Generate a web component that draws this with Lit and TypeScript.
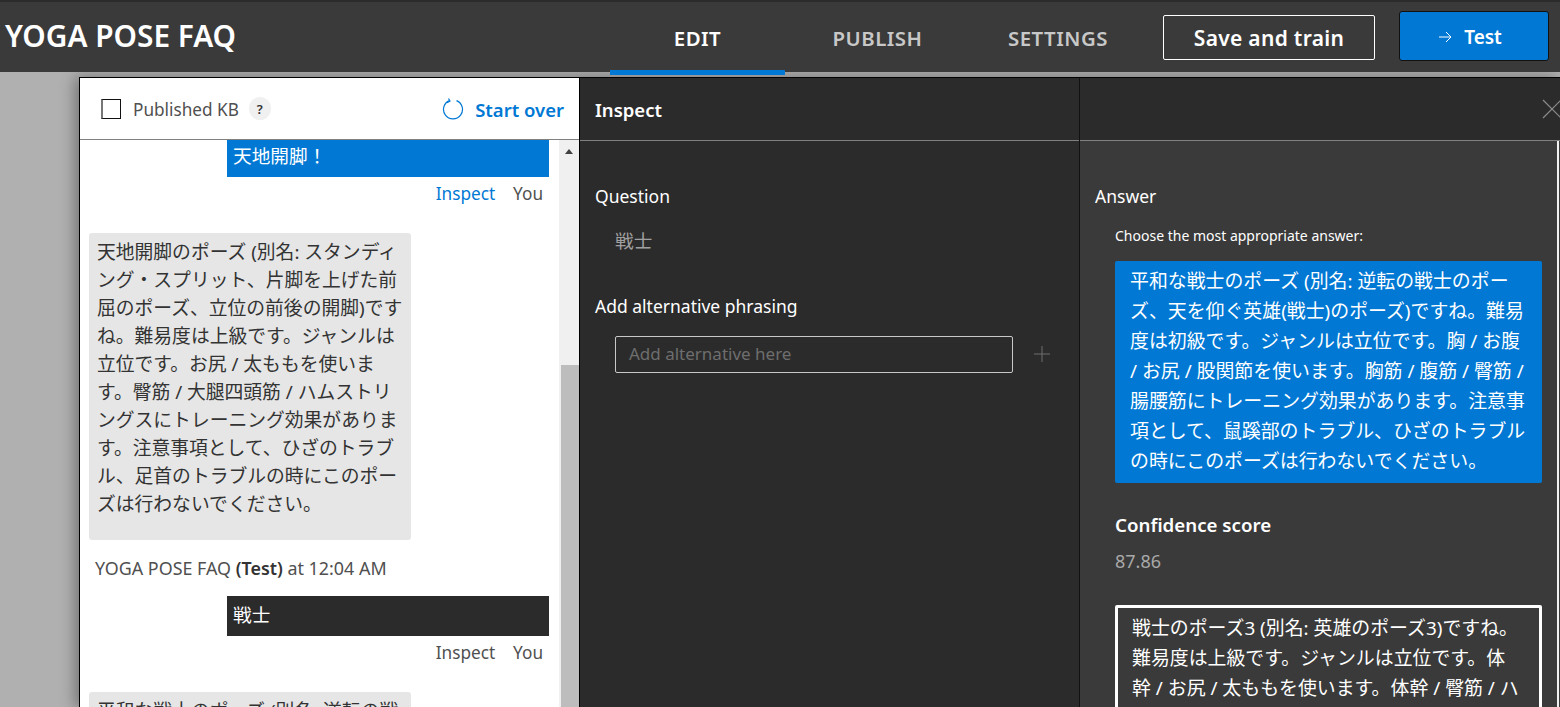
import { LitElement, html, css } from "lit";
import { customElement } from "lit/decorators.js";

const greyLines = [
  "天地開脚のポーズ (別名: スタンディ",
  "ング・スプリット、片脚を上げた前",
  "屈のポーズ、立位の前後の開脚)です",
  "ね。難易度は上級です。ジャンルは",
  "立位です。お尻 / 太ももを使いま",
  "す。臀筋 / 大腿四頭筋 / ハムストリ",
  "ングスにトレーニング効果がありま",
  "す。注意事項として、ひざのトラブ",
  "ル、足首のトラブルの時にこのポー",
  "ズは行わないでください。",
];

const answerLines = [
  "平和な戦士のポーズ (別名: 逆転の戦士のポー",
  "ズ、天を仰ぐ英雄(戦士)のポーズ)ですね。難易",
  "度は初級です。ジャンルは立位です。胸 / お腹",
  "/ お尻 / 股関節を使います。胸筋 / 腹筋 / 臀筋 /",
  "腸腰筋にトレーニング効果があります。注意事",
  "項として、鼠蹊部のトラブル、ひざのトラブル",
  "の時にこのポーズは行わないでください。",
];

const altLines = [
  "戦士のポーズ3 (別名: 英雄のポーズ3)ですね。",
  "難易度は上級です。ジャンルは立位です。体",
  "幹 / お尻 / 太ももを使います。体幹 / 臀筋 / ハ",
];

@customElement("app-root")
export class AppRoot extends LitElement {
  static styles = css`
    :host {
      display: block;
      width: 1560px;
      height: 707px;
      overflow: hidden;
      background: #b0b0b0;
      font-family: "Noto Sans", "Noto Sans CJK JP", sans-serif;
      font-size: 18px;
    }

    .line {
      white-space: nowrap;
    }

    header {
      display: flex;
      align-items: flex-start;
      height: 70px;
      background: #3a3a3a;
      border-top: 2px solid #2b2b2b;
      position: relative;
    }

    .title {
      width: 610px;
      padding: 14px 0 0 5px;
      box-sizing: border-box;
      color: #fff;
      font-size: 29.8px;
      font-weight: 600;
      line-height: 40px;
    }

    .tab {
      width: 175px;
      height: 73px;
      box-sizing: border-box;
      padding-top: 22px;
      text-align: center;
      color: #c8c8c8;
      font-size: 20.4px;
      font-weight: 600;
      line-height: 28px;
      letter-spacing: 0.5px;
    }

    .tab.active {
      color: #fff;
      border-bottom: 5px solid #0078d4;
    }

    .tab.narrow {
      width: 176px;
    }

    .tab.mid {
      width: 185px;
    }

    .save {
      margin: 13px 0 0 17px;
      width: 212px;
      height: 45px;
      box-sizing: border-box;
      border: 1px solid #fff;
      border-radius: 2px;
      background: transparent;
      color: #fff;
      font: 600 21px "Noto Sans", sans-serif;
      letter-spacing: 0.3px;
    }

    .test {
      margin: 9px 0 0 24px;
      width: 150px;
      height: 50px;
      box-sizing: border-box;
      border: 1px solid #111;
      border-radius: 3px;
      padding: 2px 8px 0 0;
      background: #0078d4;
      color: #fff;
      font: 600 19px "Noto Sans", sans-serif;
      display: flex;
      align-items: center;
      justify-content: center;
      gap: 12px;
    }

    main {
      display: flex;
      margin: 5px 0 0 79px;
      height: 630px;
      box-shadow: -4px 0 14px rgba(0, 0, 0, 0.35);
      border-top: 1px solid #000;
      border-left: 1px solid #000;
    }

    .chat {
      width: 500px;
      flex: none;
      background: #fff;
      display: flex;
      flex-direction: column;
      border-right: 1px solid #000;
      box-sizing: border-box;
    }

    .chat-head {
      height: 62px;
      flex: none;
      box-sizing: border-box;
      border-bottom: 1px solid #808080;
      display: flex;
      align-items: center;
      padding: 0 15px 0 21px;
      color: #505050;
      font-size: 17.2px;
    }

    .kb {
      padding-top: 1px;
    }

    .check {
      width: 20px;
      height: 20px;
      box-sizing: border-box;
      border: 1px solid #111;
      border-left: 2px solid #777;
      margin-right: 12px;
      flex: none;
    }

    .help {
      width: 22px;
      height: 23px;
      margin-left: 10px;
      border-radius: 50%;
      background: #f0f0f0;
      color: #333;
      font-size: 13px;
      font-weight: 600;
      display: flex;
      align-items: center;
      justify-content: center;
    }

    .start {
      margin-left: auto;
      display: flex;
      align-items: center;
      gap: 11px;
      padding-top: 1px;
      color: #0078d4;
      font-size: 18.5px;
      font-weight: 600;
    }

    .chat-body {
      flex: 1;
      display: flex;
      min-height: 0;
    }

    .messages {
      width: 479px;
      flex: none;
      overflow: hidden;
    }

    .scrollbar {
      width: 20px;
      flex: none;
      background: #f0f0f0;
      display: flex;
      flex-direction: column;
    }

    .arrow {
      width: 0;
      height: 0;
      margin: 9px auto 0;
      border-left: 4px solid transparent;
      border-right: 4px solid transparent;
      border-bottom: 5px solid #404040;
    }

    .thumb {
      margin: 211px 0 0 2px;
      flex: 1;
      background: #bdbdbd;
    }

    .mine {
      margin-left: 147px;
      width: 322px;
      box-sizing: border-box;
      padding-left: 6px;
      color: #fff;
      font-size: 18.67px;
      display: flex;
      align-items: center;
    }

    .mine.blue {
      height: 37px;
      padding-bottom: 8px;
      background: #0078d4;
    }

    .mine.dark {
      height: 40px;
      padding-bottom: 6px;
      margin-top: 15px;
      background: #2b2b2b;
    }

    .meta {
      display: flex;
      justify-content: flex-end;
      gap: 18px;
      padding: 4px 16px 0 0;
      height: 26px;
      line-height: 26px;
      color: #505050;
      font-size: 17.2px;
    }

    .meta .link {
      color: #0078d4;
    }

    .bubble {
      margin: 26px 0 0 9px;
      width: 322px;
      box-sizing: border-box;
      padding: 5px 0 0 8px;
      background: #e6e6e6;
      border-radius: 3px;
      color: #333;
      font-size: 18.8px;
      line-height: 28px;
    }

    .bubble.full {
      height: 307px;
    }

    .stamp {
      margin: 15px 0 0 15px;
      color: #505050;
      font-size: 17.9px;
      line-height: 26px;
    }

    .stamp b {
      font-weight: 600;
      color: #333;
    }

    .inspect {
      width: 500px;
      flex: none;
      background: #2b2b2b;
      border-right: 1px solid #111;
      box-sizing: border-box;
      color: #fff;
    }

    .panel-head {
      height: 63px;
      box-sizing: border-box;
      border-bottom: 1px solid #808080;
      display: flex;
      align-items: center;
      justify-content: space-between;
    }

    .inspect .panel-head {
      padding-left: 15px;
      font-size: 18.5px;
      font-weight: 600;
    }

    .label {
      font-size: 17.5px;
      line-height: 26px;
    }

    .inspect-body {
      padding: 42px 0 0 15px;
    }

    .question {
      margin: 18px 0 0 20px;
      color: #a0a0a0;
      font-size: 18.67px;
      line-height: 28px;
    }

    .inspect-body .label.alt {
      margin-top: 38px;
    }

    .alt-row {
      display: flex;
      align-items: center;
      margin: 17px 0 0 20px;
      gap: 20px;
    }

    .alt-input {
      width: 398px;
      height: 37px;
      box-sizing: border-box;
      border: 1px solid #c8c8c8;
      border-radius: 2px;
      padding-left: 13px;
      color: #6e6e6e;
      font-size: 17px;
      line-height: 33px;
    }

    .alt-row svg {
      margin-top: -2px;
    }

    .answer {
      flex: 1;
      min-width: 0;
      color: #fff;
    }

    .answer .panel-head {
      background: #2b2b2b;
      padding-right: 0;
      justify-content: flex-end;
    }

    .answer-body {
      height: 568px;
      overflow: hidden;
      background: #3a3a3a;
      box-sizing: border-box;
      padding: 42px 0 0 15px;
      position: relative;
    }

    .edge {
      position: absolute;
      top: 0;
      right: 1px;
      bottom: 0;
      width: 2px;
      background: #f0f0f0;
    }

    .hint {
      margin: 16px 0 0 20px;
      font-size: 14px;
      line-height: 22px;
    }

    .pick {
      margin: 14px 0 0 20px;
      width: 427px;
      box-sizing: border-box;
      padding: 5px 0 7px 15px;
      background: #0078d4;
      border-radius: 2px;
      font-size: 18.9px;
      line-height: 30px;
    }

    .score-title {
      margin: 28px 0 0 20px;
      font-size: 18.7px;
      font-weight: 600;
      line-height: 28px;
    }

    .score {
      margin: 9px 0 0 20px;
      color: #a8a8a8;
      font-size: 18px;
      line-height: 26px;
    }

    .other {
      margin: 31px 0 0 20px;
      width: 427px;
      height: 222px;
      box-sizing: border-box;
      padding: 5px 0 0 14px;
      border: 3px solid #fff;
      border-radius: 2px;
      font-size: 18.9px;
      line-height: 30px;
    }
  `;

  render() {
    return html`
      <header>
        <div class="title">YOGA POSE FAQ</div>
        <div class="tab active">EDIT</div>
        <div class="tab mid">PUBLISH</div>
        <div class="tab narrow">SETTINGS</div>
        <button class="save">Save and train</button>
        <div class="test">
          <svg width="14" height="14" viewBox="0 0 14 14" fill="none" stroke="#fff" stroke-width="1">
            <path d="M1 7h12M8 2l5 5-5 5" />
          </svg>
          Test
        </div>
      </header>
      <main>
        <section class="chat">
          <div class="chat-head">
            <div class="check"></div>
            <span class="kb">Published KB</span>
            <div class="help">?</div>
            <div class="start">
              <svg width="22" height="22" viewBox="0 0 22 22" fill="none" stroke="#0078d4" stroke-width="1.2">
                <path d="M7.5 2.6A9.5 9.5 0 1 0 14.5 2.6" />
                <path d="M6.5 0.5 8 3 5 4.8" />
              </svg>
              Start over
            </div>
          </div>
          <div class="chat-body">
            <div class="messages">
              <div class="mine blue">天地開脚！</div>
              <div class="meta"><span class="link">Inspect</span><span>You</span></div>
              <div class="bubble full">
                ${greyLines.map((l) => html`<div class="line">${l}</div>`)}
              </div>
              <div class="stamp">YOGA POSE FAQ <b>(Test)</b> at 12:04 AM</div>
              <div class="mine dark">戦士</div>
              <div class="meta"><span>Inspect</span><span>You</span></div>
              <div class="bubble">
                <div class="line">平和な戦士のポーズ (別名: 逆転の戦</div>
              </div>
            </div>
            <div class="scrollbar">
              <div class="arrow"></div>
              <div class="thumb"></div>
            </div>
          </div>
        </section>
        <section class="inspect">
          <div class="panel-head">Inspect</div>
          <div class="inspect-body">
            <div class="label">Question</div>
            <div class="question">戦士</div>
            <div class="label alt">Add alternative phrasing</div>
            <div class="alt-row">
              <div class="alt-input">Add alternative here</div>
              <svg width="18" height="18" viewBox="0 0 18 18" stroke="#6e6e6e" stroke-width="1">
                <path d="M9 1v16M1 9h16" />
              </svg>
            </div>
          </div>
        </section>
        <section class="answer">
          <div class="panel-head">
            <svg width="18" height="20" viewBox="0 0 18 20" stroke="#8c8c8c" stroke-width="1.2" fill="none">
              <path d="M1 1l18 18M19 1 1 19" />
            </svg>
          </div>
          <div class="answer-body">
            <div class="label">Answer</div>
            <div class="hint">Choose the most appropriate answer:</div>
            <div class="pick">
              ${answerLines.map((l) => html`<div class="line">${l}</div>`)}
            </div>
            <div class="score-title">Confidence score</div>
            <div class="score">87.86</div>
            <div class="other">
              ${altLines.map((l) => html`<div class="line">${l}</div>`)}
            </div>
            <div class="edge"></div>
          </div>
        </section>
      </main>
    `;
  }
}
